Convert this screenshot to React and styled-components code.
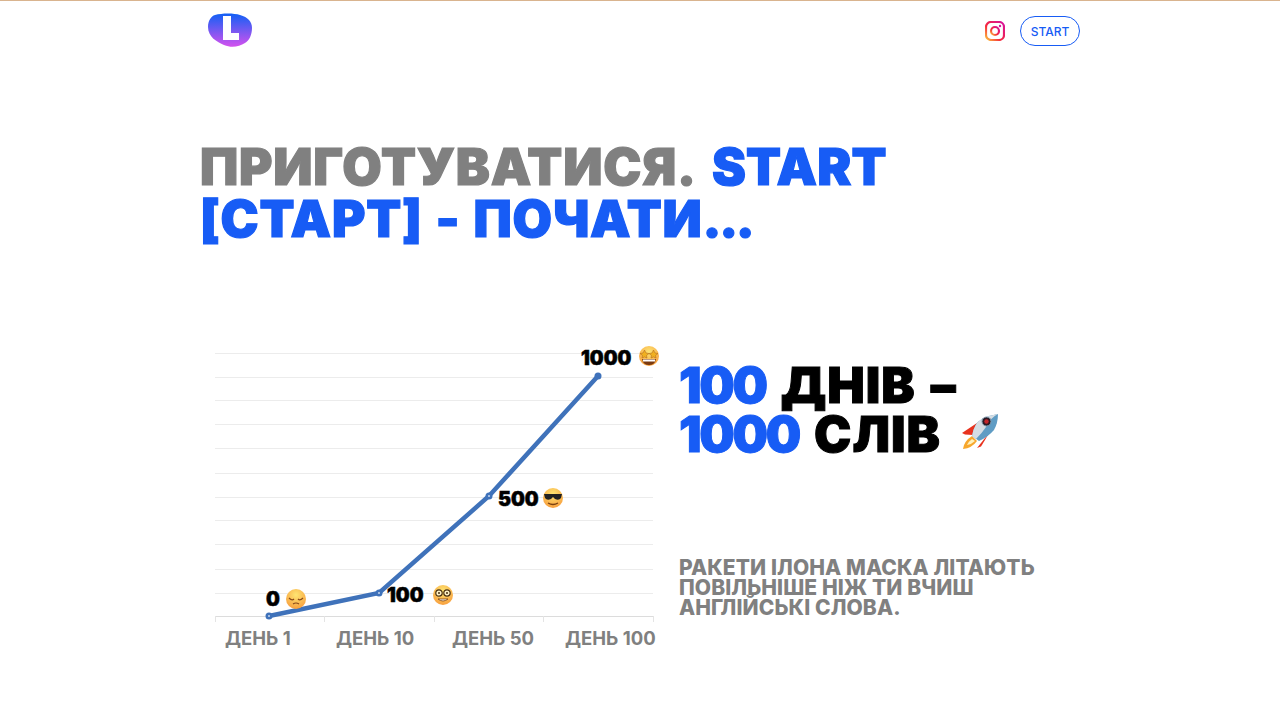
import React from 'react'
import styled, { createGlobalStyle } from 'styled-components'

const Global = createGlobalStyle`
  body {
    margin: 0;
    background: #fff;
    font-family: Inter, "Noto Sans", sans-serif;
  }
`

const Page = styled.div`
  width: 880px;
  height: 721px;
  margin: 0 auto;
  overflow: hidden;
`

const TopLine = styled.div`
  height: 1px;
  background: #d9b48f;
`

const Header = styled.header`
  display: flex;
  align-items: center;
  justify-content: space-between;
  height: 60px;
  padding-left: 8px;
`

const HeaderRight = styled.div`
  display: flex;
  align-items: center;
  gap: 15px;
`

const StartButton = styled.a`
  display: flex;
  align-items: center;
  justify-content: center;
  box-sizing: border-box;
  width: 60px;
  height: 30px;
  border: 1px solid #175cf5;
  border-radius: 15px;
  color: #175cf5;
  font-size: 12px;
  font-weight: 500;
`

const Title = styled.h1`
  margin: 80px 0 0;
  font-size: 51px;
  line-height: 52px;
  font-weight: 900;
  -webkit-text-stroke: 1.2px currentColor;
  letter-spacing: 0.8px;
  word-spacing: 2px;
  color: #808080;
  text-transform: uppercase;
`

const Blue = styled.span`
  color: #175cf5;
  letter-spacing: ${(props) => props.$spacing || 'inherit'};
`

const Latin = styled(Blue)`
  margin-left: 5px;
`

const Dots = styled.span`
  letter-spacing: -2.5px;
`

const Content = styled.section`
  display: flex;
  margin-top: 95px;
`

const Chart = styled.svg`
  display: block;
  flex: none;
  width: 479px;
  height: 320px;
`

const Side = styled.div`
  padding-top: 21px;
`

const SideTitle = styled.h2`
  margin: 0;
  font-size: 50px;
  line-height: 49px;
  font-weight: 900;
  -webkit-text-stroke: 1px currentColor;
  letter-spacing: 1px;
  word-spacing: 4px;
  color: #000;
  white-space: nowrap;
`

const Rocket = styled.svg`
  display: inline-block;
  width: 40px;
  height: 40px;
  margin-left: 19px;
  vertical-align: -1px;
`

const SideText = styled.p`
  margin: 99px 0 0;
  font-size: 21px;
  line-height: 20px;
  font-weight: 800;
  letter-spacing: 0.1px;
  color: #808080;
`

const GRID = [353, 377, 400, 424, 448, 473, 497, 520, 544, 569, 593]
const TICKS = [215, 324, 434, 543, 653]
const POINTS = [[269, 616], [379, 593], [489, 496], [598, 376]]
const DAYS = [['ДЕНЬ 1', 225], ['ДЕНЬ 10', 336], ['ДЕНЬ 50', 452], ['ДЕНЬ 100', 565]]

function Face({ x, y, children }) {
  return (
    <g transform={`translate(${x} ${y})`}>
      <circle r="10" fill="url(#face)" />
      {children}
    </g>
  )
}

function Logo() {
  return (
    <svg width="44" height="36" viewBox="0 0 44 36">
      <defs>
        <linearGradient id="logo" x1="0" y1="0" x2="0" y2="1">
          <stop offset="0" stopColor="#1160f5" />
          <stop offset="1" stopColor="#d451ee" />
        </linearGradient>
      </defs>
      <path d="M7 2C14 0 26 0 32 2C40 4 44 9 44 15C44 22 41 28 37 30C31 34 23 35 16 32C9 29 0 24 0 14C0 8 3 3 7 2Z" fill="url(#logo)" />
      <path d="M15 3H23V20H31V27H15Z" fill="#fff" />
    </svg>
  )
}

function Instagram() {
  return (
    <svg width="20" height="20" viewBox="0 0 20 20" fill="none">
      <defs>
        <linearGradient id="insta" x1="0" y1="1" x2="1" y2="0">
          <stop offset="0" stopColor="#fdc33a" />
          <stop offset="0.4" stopColor="#f5283f" />
          <stop offset="1" stopColor="#d6119e" />
        </linearGradient>
      </defs>
      <rect x="1" y="1" width="18" height="18" rx="5" stroke="url(#insta)" strokeWidth="2.2" />
      <circle cx="10" cy="10" r="4" stroke="url(#insta)" strokeWidth="2.2" />
      <circle cx="15" cy="5" r="1.2" fill="#d6119e" />
    </svg>
  )
}

export default function App() {
  return (
    <>
      <Global />
      <TopLine />
      <Page>
        <Header>
          <Logo />
          <HeaderRight>
            <Instagram />
            <StartButton>START</StartButton>
          </HeaderRight>
        </Header>
        <Title>
          Приготуватися. <Latin $spacing="0.2px">Start</Latin><br />
          <Blue>[старт] - почати<Dots>...</Dots></Blue>
        </Title>
        <Content>
          <Chart viewBox="200 340 479 320">
            <defs>
              <radialGradient id="face" cx="0.5" cy="0.3" r="0.75">
                <stop offset="0" stopColor="#fee572" />
                <stop offset="1" stopColor="#f79a3a" />
              </radialGradient>
            </defs>
            {GRID.map((y) => (
              <line key={y} x1="215" x2="653" y1={y + 0.5} y2={y + 0.5} stroke="#ececec" />
            ))}
            <line x1="215" x2="653" y1="616.5" y2="616.5" stroke="#dcdcdc" />
            {TICKS.map((x) => (
              <line key={x} x1={x + 0.5} x2={x + 0.5} y1="616" y2="622" stroke="#e4e4e4" />
            ))}
            <polyline
              points={POINTS.map((p) => p.join(',')).join(' ')}
              fill="none"
              stroke="#3f72ba"
              strokeWidth="4.5"
            />
            {POINTS.map(([x, y]) => (
              <circle key={x} cx={x} cy={y} r="3.5" fill="#3f72ba" />
            ))}
            {POINTS.slice(0, 3).map(([x, y]) => (
              <circle key={x} cx={x} cy={y} r="1" fill="#c6d6ec" />
            ))}
            <g fontSize="19.5" fontWeight="900" fill="#000" stroke="#000" strokeWidth="0.5">
              <text x="266" y="606">0</text>
              <text x="387" y="602">100</text>
              <text x="498" y="506">500</text>
              <text x="581" y="365">1000</text>
            </g>
            <Face x={296} y={599}>
              <path d="M-7 -1Q-4 2 -2 0M7 -1Q4 2 2 0" stroke="#8a4a18" strokeWidth="1.2" fill="none" />
              <path d="M-3 5Q0 3 3 5" stroke="#8a4a18" strokeWidth="1.2" fill="none" />
            </Face>
            <Face x={443} y={595}>
              <circle cx="-4" cy="-2" r="3.2" fill="#fff3c8" stroke="#4a3010" strokeWidth="1.2" />
              <circle cx="4" cy="-2" r="3.2" fill="#fff3c8" stroke="#4a3010" strokeWidth="1.2" />
              <circle cx="-4" cy="-2" r="1" fill="#4a3010" />
              <circle cx="4" cy="-2" r="1" fill="#4a3010" />
              <path d="M-5 4Q0 8 5 4Z" fill="#fff" stroke="#7a4010" strokeWidth="0.8" />
            </Face>
            <Face x={553} y={498}>
              <path d="M-9 -4H9L8 0Q6 3 2 1L0 -1L-2 1Q-6 3 -8 0Z" fill="#222" />
              <path d="M-5 5Q0 8 5 5" stroke="#7a4010" strokeWidth="1.4" fill="none" />
            </Face>
            <Face x={649} y={356}>
              <path d="M-4.500 -6L-3 -3L0 -2.500L-2.500 -0.500L-2 2L-4.500 1L-7 2L-6.500 -0.500L-9 -2.500L-6 -3Z" fill="#f0b020" stroke="#a8601a" strokeWidth="0.5" />
              <path d="M4.500 -6L6 -3L9 -2.500L6.500 -0.500L7 2L4.500 1L2 2L2.500 -0.500L0 -2.500L3 -3Z" fill="#f0b020" stroke="#a8601a" strokeWidth="0.5" />
              <path d="M-7 3H7Q6 9 0 9Q-6 9 -7 3Z" fill="#7a3a10" />
              <path d="M-6 3.500H6V5.500H-6Z" fill="#fff" />
            </Face>
            <g fontSize="18.500" fontWeight="700" fill="#808080">
              {DAYS.map(([day, x]) => (
                <text key={day} x={x} y="645">{day}</text>
              ))}
            </g>
          </Chart>
          <Side>
            <SideTitle>
              <Blue $spacing="-2.3px">100</Blue> ДНІВ –<br />
              <Blue $spacing="-2.3px">1000</Blue> СЛІВ
              <Rocket viewBox="0 0 40 40">
                <path d="M17 10L2 20L5 21.500L13 22Z" fill="#e8321e" />
                <path d="M29 20L17 35L21 33.500L25 27Z" fill="#e8321e" />
                <path d="M12 23Q4 28 3 36Q12 35 17 28Z" fill="#f7a72c" />
                <path d="M12 26Q8 29 7 32Q12 31 15 28Z" fill="#fff1bc" />
                <path d="M12 23Q14 10 22 6Q30 2 38 1Q38 10 34 17Q28 24 19 28Z" fill="#5f9cc4" />
                <path d="M12 23Q14 10 22 6Q30 2 38 1Q30 5 26 14Q22 20 16 26Z" fill="#d5dde3" />
                <circle cx="26.500" cy="8.500" r="4.500" fill="#2d1a24" stroke="#7c99ad" strokeWidth="1" />
                <circle cx="26.500" cy="8.500" r="2.200" fill="#c3252b" />
              </Rocket>
            </SideTitle>
            <SideText>
              РАКЕТИ ІЛОНА МАСКА ЛІТАЮТЬ<br />
              ПОВІЛЬНІШЕ НІЖ ТИ ВЧИШ<br />
              АНГЛІЙСЬКІ СЛОВА.
            </SideText>
          </Side>
        </Content>
      </Page>
    </>
  )
}
